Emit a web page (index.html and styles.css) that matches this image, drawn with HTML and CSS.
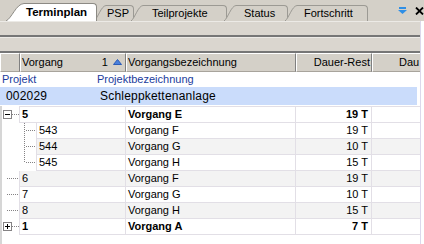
FILE: index.html
```html
<!DOCTYPE html>
<html lang="de">
<head>
<meta charset="UTF-8" />
<title>Terminplan</title>
<link rel="stylesheet" href="styles.css">
</head>
<body>

<div class="tabbar">
  <div class="tab active">
    <svg class="slant" viewBox="0 0 18 18" preserveAspectRatio="none"><path d="M0 18 C6 15, 10 1, 18 0.5 L18 18 Z" fill="#fff"/><path d="M0 18 C6 15, 10 1, 18 0.5" fill="none" stroke="#8c8a84"/></svg>
    <span class="tab-label">Terminplan</span>
  </div>
  <div class="tab">
    <svg class="slant" viewBox="0 0 12 16" preserveAspectRatio="none"><path d="M0 16 C4 13, 7 1, 12 0.5 L12 16 Z" fill="#d4d0c8"/><path d="M0 16 C4 13, 7 1, 12 0.5" fill="none" stroke="#9c9a94"/></svg>
    <span class="tab-label psp">PSP</span>
  </div>
  <div class="tab">
    <svg class="slant" viewBox="0 0 12 16" preserveAspectRatio="none"><path d="M0 16 C4 13, 7 1, 12 0.5 L12 16 Z" fill="#d4d0c8"/><path d="M0 16 C4 13, 7 1, 12 0.5" fill="none" stroke="#9c9a94"/></svg>
    <span class="tab-label teil">Teilprojekte</span>
  </div>
  <div class="tab">
    <svg class="slant" viewBox="0 0 12 16" preserveAspectRatio="none"><path d="M0 16 C4 13, 7 1, 12 0.5 L12 16 Z" fill="#d4d0c8"/><path d="M0 16 C4 13, 7 1, 12 0.5" fill="none" stroke="#9c9a94"/></svg>
    <span class="tab-label status">Status</span>
  </div>
  <div class="tab">
    <svg class="slant" viewBox="0 0 12 16" preserveAspectRatio="none"><path d="M0 16 C4 13, 7 1, 12 0.5 L12 16 Z" fill="#d4d0c8"/><path d="M0 16 C4 13, 7 1, 12 0.5" fill="none" stroke="#9c9a94"/></svg>
    <span class="tab-label fort">Fortschritt</span>
  </div>
  <div class="tab-tools">
    <svg width="9" height="7" viewBox="0 0 9 7"><rect x="1" y="0" width="7" height="2" fill="#2f8fe6"/><path d="M0 3 H9 L4.5 7 Z" fill="#2f8fe6"/></svg>
    <svg width="9" height="8" viewBox="0 0 9 8"><path d="M1 0.5 L8 7.5 M8 0.5 L1 7.5" stroke="#000" stroke-width="1.8"/></svg>
  </div>
</div>

<div class="content">
  <div class="band"></div>
  <div class="band"></div>

  <div class="grid-head">
    <div class="hcell"></div>
    <div class="hcell sort"><span>Vorgang</span><span class="sort-key">1 <svg width="9" height="6" viewBox="0 0 9 6"><path d="M0.5 5.5 L4.5 0.5 L8.5 5.5 Z" fill="#4a80dc" stroke="#2b5cb8"/></svg></span></div>
    <div class="hcell">Vorgangsbezeichnung</div>
    <div class="hcell right">Dauer-Rest</div>
    <div class="hcell clip">Dau</div>
  </div>

  <div class="project-head">
    <span>Projekt</span>
    <span>Projektbezeichnung</span>
  </div>
  <div class="project-row">
    <span>002029</span>
    <span>Schleppkettenanlage</span>
  </div>

  <div class="rows">
    <div class="row bold">
      <div class="first">
        <svg class="tree" width="17" height="16"><rect x="1.5" y="3.5" width="8" height="8" fill="#fff" stroke="#848284"/><path d="M3 7.5h5" stroke="#000"/><path d="M10 7.5h7" stroke="#848284" stroke-dasharray="1 1"/></svg>
        <span class="num">5</span>
      </div>
      <div class="cell">Vorgang E</div>
      <div class="cell right">19 T</div>
      <div class="cell"></div>
    </div>
    <div class="row">
      <div class="first">
        <svg class="tree" width="34" height="16"><path d="M22.5 0v16" stroke="#848284" stroke-dasharray="1 1"/><path d="M24 7.5h10" stroke="#848284" stroke-dasharray="1 1"/></svg>
        <span class="num">543</span>
      </div>
      <div class="cell">Vorgang F</div>
      <div class="cell right">19 T</div>
      <div class="cell"></div>
    </div>
    <div class="row alt">
      <div class="first">
        <svg class="tree" width="34" height="16"><path d="M22.5 0v16" stroke="#848284" stroke-dasharray="1 1"/><path d="M24 7.5h10" stroke="#848284" stroke-dasharray="1 1"/></svg>
        <span class="num">544</span>
      </div>
      <div class="cell">Vorgang G</div>
      <div class="cell right">10 T</div>
      <div class="cell"></div>
    </div>
    <div class="row">
      <div class="first">
        <svg class="tree" width="34" height="16"><path d="M22.5 0v8" stroke="#848284" stroke-dasharray="1 1"/><path d="M24 7.5h10" stroke="#848284" stroke-dasharray="1 1"/></svg>
        <span class="num">545</span>
      </div>
      <div class="cell">Vorgang H</div>
      <div class="cell right">15 T</div>
      <div class="cell"></div>
    </div>
    <div class="row alt">
      <div class="first">
        <svg class="tree" width="17" height="16"><path d="M5 7.5h12" stroke="#848284" stroke-dasharray="1 1"/></svg>
        <span class="num">6</span>
      </div>
      <div class="cell">Vorgang F</div>
      <div class="cell right">19 T</div>
      <div class="cell"></div>
    </div>
    <div class="row">
      <div class="first">
        <svg class="tree" width="17" height="16"><path d="M5 7.5h12" stroke="#848284" stroke-dasharray="1 1"/></svg>
        <span class="num">7</span>
      </div>
      <div class="cell">Vorgang G</div>
      <div class="cell right">10 T</div>
      <div class="cell"></div>
    </div>
    <div class="row alt">
      <div class="first">
        <svg class="tree" width="17" height="16"><path d="M5 7.5h12" stroke="#848284" stroke-dasharray="1 1"/></svg>
        <span class="num">8</span>
      </div>
      <div class="cell">Vorgang H</div>
      <div class="cell right">15 T</div>
      <div class="cell"></div>
    </div>
    <div class="row bold">
      <div class="first">
        <svg class="tree" width="17" height="16"><rect x="1.5" y="3.5" width="8" height="8" fill="#fff" stroke="#848284"/><path d="M3 7.5h5M5.5 5v5" stroke="#000"/><path d="M10 7.5h7" stroke="#848284" stroke-dasharray="1 1"/></svg>
        <span class="num">1</span>
      </div>
      <div class="cell">Vorgang A</div>
      <div class="cell right">7 T</div>
      <div class="cell"></div>
    </div>
  </div>
</div>

</body>
</html>
```

FILE: styles.css
```css
body {
  margin: 0;
  width: 424px;
  height: 244px;
  overflow: hidden;
  background: #fff;
  font-family: "Liberation Sans", Arial, sans-serif;
  font-size: 11px;
  color: #000;
}

/* tab strip */
.tabbar {
  display: flex;
  align-items: flex-end;
  height: 21px;
  padding-left: 6px;
  background: #d4d0c8;
}
.tab {
  display: flex;
  height: 16px;
  margin-left: -3px;
}
.tab .slant {
  display: block;
  width: 12px;
  height: 16px;
  flex: none;
}
.tab-label {
  box-sizing: border-box;
  height: 16px;
  line-height: 15px;
  border-top: 1px solid #9c9a94;
  border-right: 1px solid #9c9a94;
  border-top-right-radius: 4px;
  white-space: nowrap;
}
.tab.active {
  height: 18px;
  margin-left: 0;
  position: relative;
  z-index: 1;
}
.tab.active .slant {
  width: 18px;
  height: 18px;
}
.tab.active .tab-label {
  height: 18px;
  line-height: 17px;
  width: 73px;
  padding-left: 2px;
  background: #fff;
  font-weight: bold;
  font-size: 11.5px;
  border-color: #8c8a84;
}
.psp { width: 28px; padding-left: 1px; }
.teil { width: 84px; padding-left: 9px; }
.status { width: 52px; padding-left: 8px; }
.fort { width: 71px; padding-left: 7px; }

.tab-tools {
  margin-left: auto;
  display: flex;
  align-items: center;
  gap: 8px;
  height: 21px;
}
.tab-tools svg {
  display: block;
}

/* main area */
.content {
  width: 420px;
  height: 223px;
  border-right: 1px solid #dcd8ec;
  display: flex;
  flex-direction: column;
}
.band {
  height: 13px;
  flex: none;
  background: #dad6cf;
  border-top: 1px solid #eceae6;
  border-bottom: 2px solid #767676;
}

.grid-head {
  display: grid;
  grid-template-columns: 20px 106px 170px 76px 1fr;
  height: 19px;
  flex: none;
  background: #d4d0c8;
}
.hcell {
  box-sizing: border-box;
  border-top: 1px solid #fff;
  border-left: 1px solid #fff;
  border-right: 1px solid #808080;
  border-bottom: 1px solid #a8a49c;
  line-height: 17px;
  padding-left: 1px;
  white-space: nowrap;
  overflow: hidden;
}
.hcell.sort {
  display: flex;
  justify-content: space-between;
  padding-right: 3px;
}
.sort-key svg {
  margin-left: 2px;
  vertical-align: 1px;
}
.hcell.right {
  text-align: right;
  padding-right: 1px;
}
.hcell.clip {
  padding-left: 26px;
  border-right: none;
}

.project-head {
  display: grid;
  grid-template-columns: 95px 1fr;
  height: 15px;
  line-height: 15px;
  padding-left: 2px;
  flex: none;
  color: #1c3c9c;
}
.project-row {
  display: grid;
  grid-template-columns: 94px 1fr;
  height: 18px;
  line-height: 18px;
  padding-left: 6px;
  margin-right: 3px;
  flex: none;
  background: #cadcfb;
  font-size: 12px;
  letter-spacing: 0.2px;
}

/* task rows */
.rows {
  flex: 1;
  margin-top: 1px;
  border-left: 2px solid #d6d6d6;
}
.row {
  display: grid;
  grid-template-columns: 124px 170px 76px 1fr;
  line-height: 15px;
}
.row.bold {
  font-weight: bold;
}
.first {
  display: flex;
  align-items: flex-end;
}
.tree {
  display: block;
  flex: none;
}
.num,
.cell {
  box-sizing: border-box;
  height: 16px;
  border-bottom: 1px solid #e2dfe6;
  white-space: nowrap;
}
.num {
  flex: 1;
  border-left: 1px solid #e2dfe6;
  border-right: 1px solid #e2dfe6;
  padding-left: 2px;
}
.cell {
  border-right: 1px solid #e2dfe6;
  padding-left: 2px;
}
.cell:last-child {
  border-right: none;
}
.cell.right {
  text-align: right;
  padding-right: 3px;
}
.row:first-child .num,
.row:first-child .cell {
  height: 17px;
  border-top: 1px solid #e2dfe6;
}
.row.alt .num,
.row.alt .cell {
  background: #f3f3f3;
}
```
